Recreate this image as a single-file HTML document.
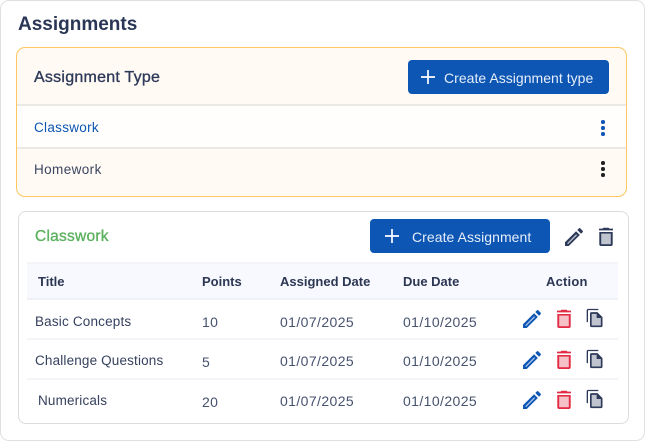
<!DOCTYPE html>
<html>
<head>
<meta charset="utf-8">
<style>
html,body{margin:0;padding:0;background:#fff;}
body{width:645px;height:441px;position:relative;overflow:hidden;font-family:"Liberation Sans",sans-serif;}
div,span,svg{position:absolute;box-sizing:border-box;}
.t{white-space:nowrap;line-height:16px;height:16px;color:#2e3a59;font-size:13.5px;}
.h{font-weight:bold;font-size:13px;color:#2c3754;}
.d{font-size:14px;color:#46526e;letter-spacing:.4px;}
.r{height:2px;left:27px;width:591px;background:#f3f4f7;}
.dot{width:3.6px;height:3.6px;border-radius:50%;}
.btn{background:#0d56b3;border-radius:4px;height:34px;}
</style>
</head>
<body>
<div style="left:0;top:0;width:645px;height:441px;border:1.5px solid #e0e0e0;border-radius:9px;background:#fff"></div>
<span class="t" style="left:18px;top:15px;height:20px;line-height:20px;font-size:19px;font-weight:bold;color:#2a3655">Assignments</span>

<div style="left:16px;top:47px;width:611px;height:150px;border:1px solid #fdc660;border-radius:9px;background:#fffaf4;overflow:hidden">
  <div style="left:0;top:57px;width:100%;height:43px;background:#fffefc"></div>
  <div style="left:0;top:56px;width:100%;height:2px;background:#ece8e3"></div>
  <div style="left:0;top:99px;width:100%;height:2px;background:#ece8e3"></div>
</div>
<span class="t" style="left:34px;top:70px;font-size:16px;color:#2e3a59;-webkit-text-stroke:.35px #2e3a59;letter-spacing:.25px">Assignment Type</span>
<div class="btn" style="left:408px;top:60px;width:201px"></div>
<svg style="left:421px;top:70px" width="14" height="14" viewBox="0 0 14 14"><path d="M7 0v14M0 7h14" stroke="#fff" stroke-width="1.7" fill="none"/></svg>
<span class="t" style="left:444px;top:70px;font-size:14px;color:#e6eefa;letter-spacing:.03px">Create Assignment type</span>
<span class="t" style="left:34px;top:120px;color:#0d56b3;letter-spacing:.3px">Classwork</span>
<span class="t" style="left:34px;top:162px;color:#3a4560;letter-spacing:.4px">Homework</span>
<div class="dot" style="left:601.2px;top:120px;background:#0d56b3"></div>
<div class="dot" style="left:601.2px;top:126.4px;background:#0d56b3"></div>
<div class="dot" style="left:601.2px;top:132.4px;background:#0d56b3"></div>
<div class="dot" style="left:601.2px;top:161px;background:#222"></div>
<div class="dot" style="left:601.2px;top:167px;background:#222"></div>
<div class="dot" style="left:601.2px;top:173px;background:#222"></div>

<div style="left:18px;top:211px;width:611px;height:213px;border:1px solid #dcdcdc;border-radius:8px;background:#fff"></div>
<span class="t" style="left:35px;top:229px;font-size:15.5px;color:#5cb15f;-webkit-text-stroke:.35px #5cb15f;letter-spacing:.25px">Classwork</span>
<div class="btn" style="left:370px;top:219px;width:180px"></div>
<svg style="left:385px;top:229px" width="14" height="14" viewBox="0 0 14 14"><path d="M7 0v14M0 7h14" stroke="#fff" stroke-width="1.7" fill="none"/></svg>
<span class="t" style="left:412px;top:229px;font-size:14px;color:#e6eefa;letter-spacing:.06px">Create Assignment</span>

<svg style="left:562px;top:225px" width="24" height="24" viewBox="0 0 24 24"><path d="M3 21v-3.75L14.06 6.19l3.75 3.75L6.75 21z" fill="#2e3a59"/><path d="M5.2 18.2L14.1 9.3l.9.9-8.9 8.9z" fill="#c0c4cf"/><path d="M15.3 4.95l1.6-1.6a1 1 0 0 1 1.41 0l2.34 2.34a1 1 0 0 1 0 1.41l-1.6 1.6z" fill="#2e3a59"/></svg>
<svg style="left:594px;top:225px" width="24" height="24" viewBox="0 0 24 24"><path d="M5.3 19.3a1.7 1.7 0 0 0 1.7 1.7h10a1.7 1.7 0 0 0 1.7-1.7V7H5.3z" fill="#2e3a59"/><rect x="7.2" y="8.6" width="9.6" height="10.6" fill="#c0c4cf"/><path d="M15.5 3.6l-1-.8h-5l-1 .8H5v1.8h14V3.6z" fill="#2e3a59"/></svg>

<div style="left:27px;top:262px;width:591px;height:38px;background:#f8f9fe;border-top:2px solid #f4f5f9;border-bottom:2px solid #f0f1f6"></div>
<span class="t h" style="left:38px;top:274px">Title</span>
<span class="t h" style="left:202px;top:274px">Points</span>
<span class="t h" style="left:280px;top:274px">Assigned Date</span>
<span class="t h" style="left:403px;top:274px">Due Date</span>
<span class="t h" style="left:546px;top:274px;letter-spacing:.2px">Action</span>

<div class="r" style="top:338px"></div>
<div class="r" style="top:378px"></div>

<span class="t" style="left:35px;top:314px;color:#36415f;letter-spacing:.18px">Basic Concepts</span>
<span class="t" style="left:35px;top:353px;color:#36415f;letter-spacing:.16px">Challenge Questions</span>
<span class="t" style="left:38px;top:393px;color:#36415f;letter-spacing:.16px">Numericals</span>
<span class="t d" style="left:202px;top:314px">10</span>
<span class="t d" style="left:202px;top:354px">5</span>
<span class="t d" style="left:202px;top:394px">20</span>
<span class="t d" style="left:280px;top:314px">01/07/2025</span>
<span class="t d" style="left:280px;top:353px">01/07/2025</span>
<span class="t d" style="left:280px;top:393px">01/07/2025</span>
<span class="t d" style="left:403px;top:314px">01/10/2025</span>
<span class="t d" style="left:403px;top:353px">01/10/2025</span>
<span class="t d" style="left:403px;top:393px">01/10/2025</span>

<svg width="0" height="0" style="left:0;top:0">
<defs>
<g id="pen"><path d="M3 21v-3.75L14.06 6.19l3.75 3.75L6.75 21z" fill="#0d56b3"/><path d="M5.2 18.2L14.1 9.3l.9.9-8.9 8.9z" fill="#a9c4e8"/><path d="M15.3 4.95l1.6-1.6a1 1 0 0 1 1.41 0l2.34 2.34a1 1 0 0 1 0 1.41l-1.6 1.6z" fill="#0d56b3"/></g>
<g id="bin"><path d="M5.3 19.3a1.7 1.7 0 0 0 1.7 1.7h10a1.7 1.7 0 0 0 1.7-1.7V7H5.3z" fill="#e22c45"/><rect x="7.2" y="8.6" width="9.6" height="10.6" fill="#f6c0c7"/><path d="M15.5 3.6l-1-.8h-5l-1 .8H5v1.8h14V3.6z" fill="#e22c45"/></g>
<g id="cop"><path d="M16 1H4a2 2 0 0 0-2 2v14h1.6V2.6H16z" fill="#2e3a59"/><path d="M8 5h7l6 6v10a2 2 0 0 1-2 2H8a2 2 0 0 1-2-2V7a2 2 0 0 1 2-2z" fill="#2e3a59"/><path d="M8 7h6v5h5v9H8z" fill="#c0c4cf"/></g>
</defs>
</svg>

<svg style="left:520px;top:307px" width="24" height="24" viewBox="0 0 24 24"><use href="#pen"/></svg>
<svg style="left:552px;top:307px" width="24" height="24" viewBox="0 0 24 24"><use href="#bin"/></svg>
<svg style="left:585.3px;top:308px" width="20" height="20" viewBox="0 0 24 24"><use href="#cop"/></svg>

<svg style="left:520px;top:348px" width="24" height="24" viewBox="0 0 24 24"><use href="#pen"/></svg>
<svg style="left:552px;top:348px" width="24" height="24" viewBox="0 0 24 24"><use href="#bin"/></svg>
<svg style="left:585.3px;top:349px" width="20" height="20" viewBox="0 0 24 24"><use href="#cop"/></svg>

<svg style="left:520px;top:388px" width="24" height="24" viewBox="0 0 24 24"><use href="#pen"/></svg>
<svg style="left:552px;top:388px" width="24" height="24" viewBox="0 0 24 24"><use href="#bin"/></svg>
<svg style="left:585.3px;top:389px" width="20" height="20" viewBox="0 0 24 24"><use href="#cop"/></svg>
</body>
</html>
